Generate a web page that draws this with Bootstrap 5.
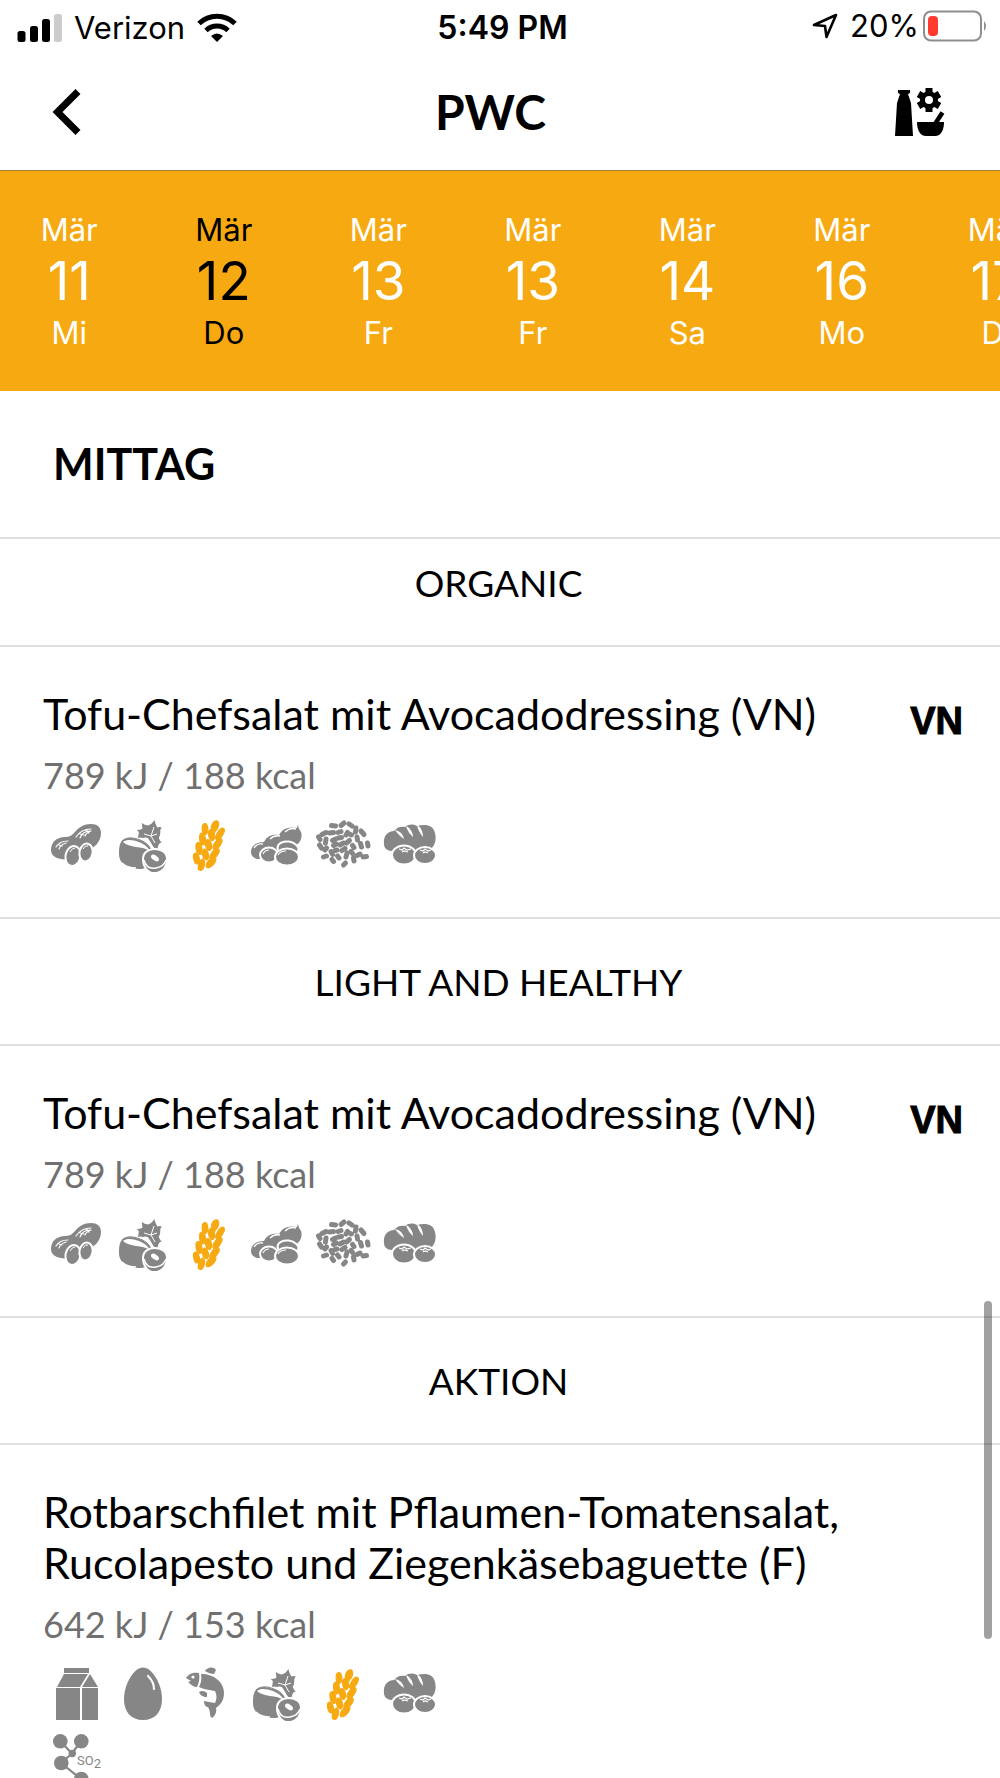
<!DOCTYPE html>
<html lang="de">
<head>
<meta charset="utf-8">
<meta name="viewport" content="width=device-width, initial-scale=1">
<title>PWC – Speiseplan</title>
<link href="https://cdn.jsdelivr.net/npm/bootstrap@5.3.0/dist/css/bootstrap.min.css" rel="stylesheet">
<style>
  body { font-family: Lato, "Liberation Sans", sans-serif; color: #000; background: #fff; }
  .app { height: 100vh; }
  .ui-font { font-family: Inter, "Liberation Sans", sans-serif; }
  .status { height: 55px; padding: 0 12px 0 17px; font-size: 31px; line-height: 38px; }
  .status > div { flex: 1 1 0; }
  .status .clock { font-size: 32px; font-weight: 600; }
  .status .locate { margin-right: 12px; }
  .topbar { height: 115px; padding: 0 55px 2px 52px; }
  .topbar h1 { font-size: 48px; line-height: 56px; font-weight: 700; }
  .days { background: #f7a911; border-top: 1px solid #a08036; padding: 38px 0; }
  .days ul { margin-left: -8px; }
  .days li { flex: 0 0 15.33%; }
  .days a { color: #fff; font-size: 31px; line-height: 41px; }
  .days a strong { font-size: 53px; line-height: 62px; font-weight: 400; }
  .days a.active { color: #000; }
  .meal-time { font-size: 43px; line-height: 52px; font-weight: 700; padding: 47px 53px; }
  .group-name { font-size: 37px; line-height: 44px; font-weight: 400; padding: 41px 3px 40px 0; border-top: 2px solid #dfdfdf; }
  .group-name.first { padding-top: 22px; }
  .dish { border-top: 2px solid #dfdfdf; padding: 41px 37px 44px 43px; }
  .dish h3 { font-size: 43px; line-height: 51px; font-weight: 400; }
  .dish .energy { font-size: 36px; line-height: 44px; margin-top: 14px; color: #707070; }
  .dish .diet { font-family: "Liberation Sans", sans-serif; font-size: 38px; line-height: 36px; font-weight: 700; padding-top: 15px; -webkit-text-stroke: 1px #000; }
  .allergens { width: 406px; gap: 11px; margin-top: 20px; padding-left: 4px; color: #868686; }
  .allergens svg { width: 56px; height: 56px; display: block; }
  .allergens .grain { color: #f7a911; }
  .thumb { top: 1301px; right: 8px; width: 8px; height: 338px; border-radius: 4px; background: rgba(0,0,0,.37); }
</style>
<script src="https://cdn.jsdelivr.net/npm/bootstrap@5.3.0/dist/js/bootstrap.bundle.min.js"></script>
</head>
<body>
<svg class="d-none" aria-hidden="true">
  <symbol id="peanut" viewBox="0 0 56 56">
    <path fill="currentColor" d="M4 33c0-8 6-13 14-13 4 0 6-1 9-4 5-6 10-9 17-9 6 0 10 3 10 9 0 9-7 16-16 18-6 1-9 3-13 6-3 2-7 3-11 2-6-1-10-4-10-9z"/>
    <g fill="none" stroke="#fff" stroke-width="1.200" stroke-linecap="round"><path d="M29 20c4-6 9-8 15-8M33 21c2-5 6-7 10-7M38 19c1-3 3-4 6-5M33 17l4 1M39 13l3 3M9 30c3-5 7-6 12-6M12 32c1-4 4-5 7-6M12 28l3 1"/></g>
    <g fill="currentColor" stroke="#fff" stroke-width="2"><ellipse cx="26" cy="39" rx="7.500" ry="10" transform="rotate(12 26 39)"/><ellipse cx="39" cy="35.500" rx="6.500" ry="9" transform="rotate(12 39 35.500)"/></g>
    <path fill="none" stroke="#fff" d="M23 35q2-4 5-4M36 32q2-4 5-3"/>
  </symbol>
  <symbol id="nut" viewBox="0 0 56 56">
    <path fill="currentColor" d="M40.300 3q1 4 3 7.500 2-1 4.500 0-2 2-1.500 5 0 3-1.500 5.500 1 3 3 4.500-2 0-3 2-1 2-1.500 5.500-3-1-4.500-4-2-4-5-8-3-1-5 0-2-1-5 0 1-3 1-6l-2-2q3 0 5.500-1 0-3-.5-6 3 2 6 2.500 4-1 6.500-5.500z"/>
    <path fill="none" stroke="#fff" d="M40 10l-3 9-7-2M37 19l6-2M37 19l4 7"/>
    <path fill="currentColor" d="M7 25c3-4 9-5 15-3 9 2 16 8 16 14L34 50c-4 2-10 3-15 1C9 49 5 44 5 37c0-5 0-8 2-12z"/>
    <path fill="#fff" d="M9 25c4-3 10-2 16 0 5 2 9 5 11 9-7-5-21-3-27-9z"/>
    <path fill="none" stroke="currentColor" d="M8 24c4-4 11-4 18-1 6 2 10 6 11 11"/>
    <path fill="none" stroke="#fff" stroke-width="1.500" d="M8 46c4 4 8 5 14 5"/>
    <path fill="currentColor" stroke="#fff" stroke-width="2" d="M29 42c0-7 6-10 12-10 7 0 12 4 12 10 0 9-6 14-13 14-6 0-11-6-11-14z"/>
    <path fill="none" stroke="#fff" stroke-width="1.500" d="M30 43c2 8 7 9 12 8s9-4 10-8"/>
    <ellipse cx="41" cy="41" rx="4.500" ry="2.500" fill="#fff" transform="rotate(35 41 41)"/>
  </symbol>
  <symbol id="wheat" viewBox="1 0 56 56">
    <path fill="none" stroke="currentColor" stroke-width="1.200" d="M18 53L38 8"/>
    <g fill="currentColor" stroke="currentColor" stroke-width="1.200">
      <ellipse cx="35" cy="9" rx="3.300" ry="5.500" transform="rotate(22 35 9)"/>
      <ellipse cx="25" cy="12" rx="2.800" ry="5.500" transform="rotate(-3 25 12)"/>
      <ellipse cx="40" cy="17" rx="2.800" ry="6.500" transform="rotate(33 40 17)"/>
      <ellipse cx="31.500" cy="18" rx="2.900" ry="5.500" transform="rotate(-10 31.500 18)"/>
      <ellipse cx="22.500" cy="22" rx="2.900" ry="6" transform="rotate(-5 22.500 22)"/>
      <ellipse cx="37.500" cy="27" rx="2.900" ry="6.500" transform="rotate(35 37.500 27)"/>
      <ellipse cx="28.500" cy="28" rx="2.900" ry="5.500" transform="rotate(-10 28.500 28)"/>
      <ellipse cx="19" cy="31.500" rx="2.900" ry="6" transform="rotate(-10 19 31.500)"/>
      <ellipse cx="34.500" cy="37" rx="2.900" ry="6.500" transform="rotate(38 34.500 37)"/>
      <ellipse cx="25.500" cy="37.500" rx="2.900" ry="5.500" transform="rotate(-12 25.500 37.500)"/>
      <ellipse cx="16.500" cy="41.500" rx="2.800" ry="5.500" transform="rotate(-12 16.500 41.500)"/>
      <ellipse cx="31" cy="45.500" rx="3" ry="6.500" transform="rotate(42 31 45.500)"/>
      <ellipse cx="21.500" cy="48" rx="2.800" ry="5.500" transform="rotate(15 21.500 48)"/>
    </g>
  </symbol>
  <symbol id="soy" viewBox="0 0 56 56">
    <path fill="currentColor" d="M50 8l1 4c3 3 3 6 2 10-2 6-7 8-13 7-5 6-10 6-15 6-4 6-9 7-14 7-5 0-8-3-8-7 0-7 6-10 13-10 3-6 8-8 15-7 3-6 9-9 18-7z"/>
    <path fill="none" stroke="#fff" stroke-width="1.400" d="M6 31q3-5 9-4M22 22q4-4 10-3M37 15q5-5 11-3"/>
    <g fill="currentColor" stroke="#fff" stroke-width="2"><ellipse cx="40" cy="31.500" rx="10.500" ry="7" transform="rotate(8 40 31.500)"/><ellipse cx="21" cy="38" rx="9" ry="7.500"/><ellipse cx="39" cy="40" rx="12" ry="8.500"/></g>
    <path fill="none" stroke="#fff" stroke-width="1.200" d="M15 37q2-4 6-4M30 38q2-4 8-4"/>
  </symbol>
  <symbol id="sesame" viewBox="0 0 56 56">
    <path fill="none" stroke="currentColor" stroke-width="5" stroke-linecap="round" d="M16.500 8.500l4 .5M26 8.500l3-2.500M34 7l3 2M23 15.500l3-1M14.500 16l4-.5M7 17.500l4-2M3.500 20l1.500 2.500M41 11l-.5 4M46 14l3 3.500M31 18l1.500-2.500M35.500 17.500l1 .5M42 20l.5 3M52.500 26l.5 3M45.500 26.500l1 3.500M23.500 21l3-.5M17.500 23.500l3-1.500M11 22l-.5 4M4.500 28l2 3M10 33l1.500-2M25 28l3.500-2M18.500 28.500l3-1.500M31.500 26l3-2.500M37.500 28.500l1.500 2M27 33.500l3-2M20 33.500l2-.5M16 34.500l1.500 3M8.500 40l3-1M17 42.500l1.500 2M22.500 39l1.500 2M32 36l-1 4M36 34.500l1.500 2M42 38.500l3-1.500M48 40l3.500-.5M38.500 41l.5 3M28.500 48l2-2"/>
  </symbol>
  <symbol id="bread" viewBox="0 0 56 56">
    <path fill="currentColor" d="M2 27c-1-8 4-13 10-13 3-4 7-5 11-4 4-3 8-3 12-1 9-2 16-1 18 7 2 8-1 15-7 18H10c-5 0-8-3-8-7z"/>
    <path fill="#fff" d="M13 13c5 1 8 4 9 9-4-3-6-5-9-9zM24 9c4 2 7 6 7 11-3-3-5-5-7-11zM35 8c4 2 6 7 6 12-3-4-5-7-6-12z"/>
    <g fill="currentColor" stroke="#fff" stroke-width="2"><ellipse cx="22" cy="38" rx="12" ry="9.500"/><ellipse cx="43" cy="38.500" rx="11" ry="8.500"/></g>
    <path fill="none" stroke="#fff" stroke-width="1.200" d="M17 32l3 1 2-2 3 2 4-1M20 35l2-1 4 1M38 33l3 1 2-2 3 2 3-1M41 36l2-1 3 1"/>
  </symbol>
  <symbol id="milk" viewBox="0 0 56 56">
    <path fill="currentColor" d="M17 2h25v5H17zM17 8h24l-8 13H10zM43 8l8 13H35zM9 22h24v32H9zM35 22h16v32H35z"/>
  </symbol>
  <symbol id="egg" viewBox="0 0 56 56">
    <path fill="currentColor" d="M29 1.500C38 1.500 48 18 48 33c0 13-7 21-19 21s-19-8-19-21C10 18 20 1.500 29 1.500z"/>
    <path fill="none" stroke="#fff" stroke-width="2.200" stroke-linecap="round" d="M34 10q6 6 6 13"/>
  </symbol>
  <symbol id="fish" viewBox="0 0 56 56">
    <path fill="currentColor" d="M5 12C8 7 13 6 18 7c1 5 0 10-2 14-3 0-6-2-9-5l3-1z"/>
    <path fill="currentColor" d="M20 8c13 0 23 8 23 19 0 8-4 12-8 15 1 4-1 8-4 10-1-1-2-2-2-4 0-3-1-5-2-7-2 0-4-2-4-6 3 1 7 1 11 2 2-4 2-8 0-12-4-1-10-1-16-4 2-4 3-8 2-13zM24 5c2-4 9-5 11-1l-2 4c-3 0-6-1-9-3zM18 26c3-2 6-1 8 1v4c-4 0-7-2-8-5z"/>
    <circle cx="12" cy="11" r="1.600" fill="#fff"/>
  </symbol>
  <symbol id="so2" viewBox="0 0 56 56">
    <path fill="none" stroke="currentColor" stroke-width="2.200" d="M13 8l12 12.500L34 8M25 20.500L14 30l20 16"/>
    <g fill="currentColor"><circle cx="13.300" cy="8.300" r="7.300"/><circle cx="34.300" cy="8.300" r="7.300"/><circle cx="25.300" cy="20.500" r="3.700"/><circle cx="14.300" cy="30" r="7.300"/><circle cx="34.300" cy="46" r="7.300"/></g>
    <text x="30" y="32" font-family="Roboto, sans-serif" font-size="13" fill="currentColor">SO<tspan dy="3">2</tspan></text>
  </symbol>
</svg>

<div class="app d-flex flex-column overflow-hidden position-relative">
  <div class="status ui-font d-flex align-items-center flex-shrink-0">
    <div class="d-flex align-items-center gap-2">
      <svg width="45" height="30" viewBox="0 0 45 30"><rect x="0.500" y="18" width="8" height="11" rx="2.500"/><rect x="13" y="13" width="8" height="16" rx="2.500"/><rect x="25" y="6" width="8" height="23" rx="2.500"/><rect x="37" y="1" width="8" height="28" rx="2.500" fill="#ccc"/></svg>
      <span class="ps-1">Verizon</span>
      <svg class="ms-1" width="40" height="29" viewBox="0 0 40 29"><g fill="none" stroke="#000" stroke-width="5"><path d="M2 10.500a26 26 0 0 1 36 0"/><path d="M9 17.500a16 16 0 0 1 22 0"/></g><path d="M20 29l-6-6q6-5 12 0z"/></svg>
    </div>
    <span class="clock">5:49 PM</span>
    <div class="d-flex align-items-center justify-content-end pb-1">
      <svg class="locate" width="26" height="26" viewBox="0 0 26 26"><path d="M2 12L24 2 14.500 24 13 13z" fill="none" stroke="#000" stroke-width="2.600" stroke-linejoin="round"/></svg>
      <span>20%</span>
      <svg class="ms-1" width="65" height="32" viewBox="0 0 65 32"><rect x="1" y="1.500" width="57" height="29" rx="7" fill="none" stroke="#8e8e8e" stroke-width="2"/><rect x="5" y="6" width="10" height="20" rx="4" fill="#ff3b30"/><path d="M61 11q4 5 0 10z" fill="#8e8e8e"/></svg>
    </div>
  </div>

  <header class="topbar d-flex align-items-center justify-content-between flex-shrink-0">
    <button type="button" class="btn p-0 border-0" aria-label="Zurück"><svg class="d-block" width="34" height="46" viewBox="0 0 34 46"><path d="M26 2.500L5.500 23 26 43.500" fill="none" stroke="#000" stroke-width="7"/></svg></button>
    <h1 class="m-0">PWC</h1>
    <button type="button" class="btn p-0 border-0" aria-label="Allergene filtern"><svg class="d-block" width="50" height="50" viewBox="0 0 50 50"><path d="M3 3h12v3l-2 1 3 9 2 33H0L2 16l3-9-2-1z"/><g stroke="#000" stroke-width="7"><path d="M34 1v24M23.500 7l21 12M23.500 19l21-12"/></g><circle cx="34" cy="13" r="9"/><circle cx="34" cy="13" r="4" fill="#fff"/><path d="M22 35h27c0 8-3 14-9 14h-9c-6 0-9-6-9-14z"/><path d="M47.500 25.500L40 37" stroke="#000" stroke-width="4.500"/></svg></button>
  </header>

  <nav class="days ui-font flex-shrink-0 overflow-hidden" aria-label="Tage">
    <ul class="list-unstyled d-flex mb-0 text-center">
      <li><a class="d-block text-decoration-none" href="#">Mär<strong class="d-block">11</strong>Mi</a></li>
      <li><a class="d-block text-decoration-none active" href="#" aria-current="date">Mär<strong class="d-block">12</strong>Do</a></li>
      <li><a class="d-block text-decoration-none" href="#">Mär<strong class="d-block">13</strong>Fr</a></li>
      <li><a class="d-block text-decoration-none" href="#">Mär<strong class="d-block">13</strong>Fr</a></li>
      <li><a class="d-block text-decoration-none" href="#">Mär<strong class="d-block">14</strong>Sa</a></li>
      <li><a class="d-block text-decoration-none" href="#">Mär<strong class="d-block">16</strong>Mo</a></li>
      <li><a class="d-block text-decoration-none" href="#">Mär<strong class="d-block">17</strong>Di</a></li>
    </ul>
  </nav>

  <main class="flex-grow-1 overflow-hidden">
    <h2 class="meal-time m-0">MITTAG</h2>

    <h2 class="group-name first m-0 text-center">ORGANIC</h2>
    <article class="dish">
      <div class="d-flex justify-content-between"><h3 class="m-0">Tofu-Chefsalat mit Avocadodressing (VN)</h3><span class="diet">VN</span></div>
      <p class="energy mb-0">789 kJ / 188 kcal</p>
      <div class="allergens d-flex flex-wrap">
        <svg><use href="#peanut"/></svg><svg><use href="#nut"/></svg><svg class="grain"><use href="#wheat"/></svg><svg><use href="#soy"/></svg><svg><use href="#sesame"/></svg><svg><use href="#bread"/></svg>
      </div>
    </article>

    <h2 class="group-name m-0 text-center">LIGHT AND HEALTHY</h2>
    <article class="dish">
      <div class="d-flex justify-content-between"><h3 class="m-0">Tofu-Chefsalat mit Avocadodressing (VN)</h3><span class="diet">VN</span></div>
      <p class="energy mb-0">789 kJ / 188 kcal</p>
      <div class="allergens d-flex flex-wrap">
        <svg><use href="#peanut"/></svg><svg><use href="#nut"/></svg><svg class="grain"><use href="#wheat"/></svg><svg><use href="#soy"/></svg><svg><use href="#sesame"/></svg><svg><use href="#bread"/></svg>
      </div>
    </article>

    <h2 class="group-name m-0 text-center">AKTION</h2>
    <article class="dish">
      <h3 class="m-0">Rotbarschfilet mit Pflaumen-Tomatensalat,<br>Rucolapesto und Ziegenkäsebaguet&zwnj;te (F)</h3>
      <p class="energy mb-0">642 kJ / 153 kcal</p>
      <div class="allergens d-flex flex-wrap">
        <svg><use href="#milk"/></svg><svg><use href="#egg"/></svg><svg><use href="#fish"/></svg><svg><use href="#nut"/></svg><svg class="grain"><use href="#wheat"/></svg><svg><use href="#bread"/></svg><svg><use href="#so2"/></svg>
      </div>
    </article>
  </main>
  <div class="thumb position-absolute"></div>
</div>
</body>
</html>
